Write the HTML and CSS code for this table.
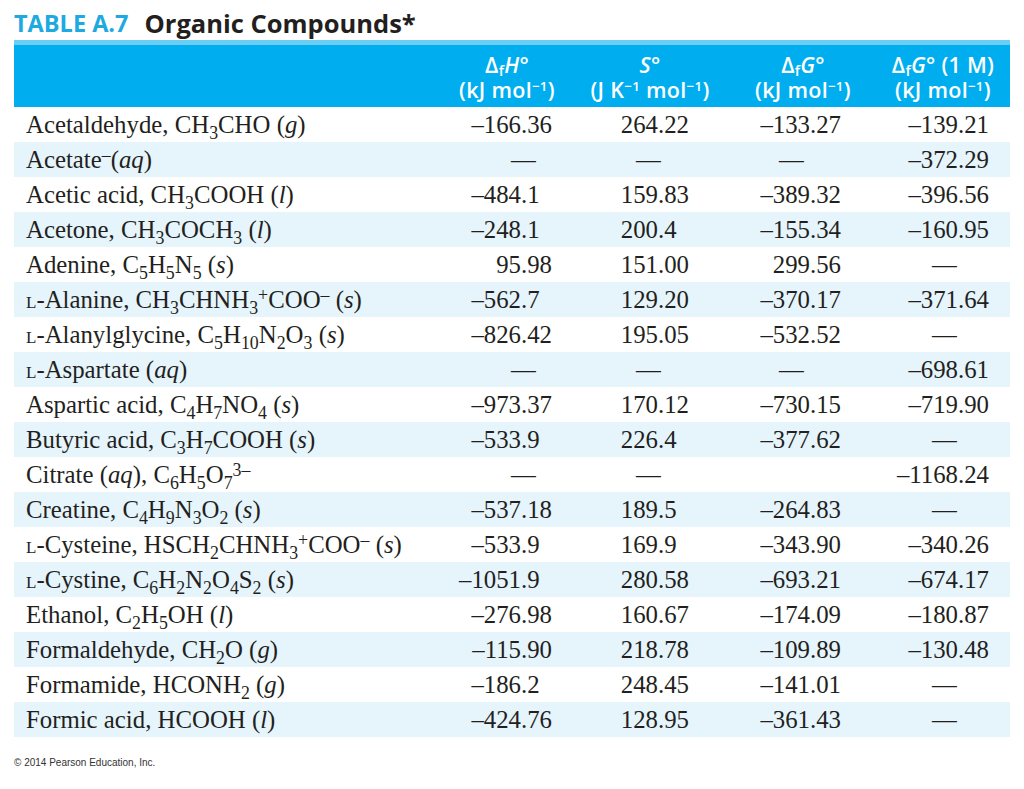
FILE: index.html
```html
<!DOCTYPE html>
<html>
<head>
<meta charset="utf-8">
<link rel="stylesheet" href="styles.css">
</head>
<body>
<div class="page">
  <h1 class="title"><span class="tag">TABLE A.7</span><span class="name">Organic Compounds*</span></h1>
  <div class="table">
    <div class="head">
      <div class="hc h0"></div>
      <div class="hc h1"><span>Δ<sub>f</sub><i>H</i>°</span><span>(kJ mol<sup>−1</sup>)</span></div>
      <div class="hc h2"><span><i>S</i>°</span><span>(J K<sup>−1</sup> mol<sup>−1</sup>)</span></div>
      <div class="hc h3"><span>Δ<sub>f</sub><i>G</i>°</span><span>(kJ mol<sup>−1</sup>)</span></div>
      <div class="hc h4"><span>Δ<sub>f</sub><i>G</i>° (1 M)</span><span>(kJ mol<sup>−1</sup>)</span></div>
    </div>

    <div class="row"><div class="nm">Acetaldehyde, CH<sub>3</sub>CHO (<i>g</i>)</div>
      <div class="c c1"><span class="i">–166</span><span class="f">.36</span></div>
      <div class="c c2"><span class="i">264</span><span class="f">.22</span></div>
      <div class="c c3"><span class="i">–133</span><span class="f">.27</span></div>
      <div class="c c4"><span class="i">–139</span><span class="f">.21</span></div></div>

    <div class="row alt"><div class="nm">Acetate<sup>–</sup>(<i>aq</i>)</div>
      <div class="c c1"><span class="d">—</span></div>
      <div class="c c2"><span class="d">—</span></div>
      <div class="c c3"><span class="d">—</span></div>
      <div class="c c4"><span class="i">–372</span><span class="f">.29</span></div></div>

    <div class="row"><div class="nm">Acetic acid, CH<sub>3</sub>COOH (<i>l</i>)</div>
      <div class="c c1"><span class="i">–484</span><span class="f">.1</span></div>
      <div class="c c2"><span class="i">159</span><span class="f">.83</span></div>
      <div class="c c3"><span class="i">–389</span><span class="f">.32</span></div>
      <div class="c c4"><span class="i">–396</span><span class="f">.56</span></div></div>

    <div class="row alt"><div class="nm">Acetone, CH<sub>3</sub>COCH<sub>3</sub> (<i>l</i>)</div>
      <div class="c c1"><span class="i">–248</span><span class="f">.1</span></div>
      <div class="c c2"><span class="i">200</span><span class="f">.4</span></div>
      <div class="c c3"><span class="i">–155</span><span class="f">.34</span></div>
      <div class="c c4"><span class="i">–160</span><span class="f">.95</span></div></div>

    <div class="row"><div class="nm">Adenine, C<sub>5</sub>H<sub>5</sub>N<sub>5</sub> (<i>s</i>)</div>
      <div class="c c1"><span class="i">95</span><span class="f">.98</span></div>
      <div class="c c2"><span class="i">151</span><span class="f">.00</span></div>
      <div class="c c3"><span class="i">299</span><span class="f">.56</span></div>
      <div class="c c4"><span class="d">—</span></div></div>

    <div class="row alt"><div class="nm"><span class="sc">l</span>-Alanine, CH<sub>3</sub>CHNH<sub>3</sub><sup>+</sup>COO<sup>–</sup> (<i>s</i>)</div>
      <div class="c c1"><span class="i">–562</span><span class="f">.7</span></div>
      <div class="c c2"><span class="i">129</span><span class="f">.20</span></div>
      <div class="c c3"><span class="i">–370</span><span class="f">.17</span></div>
      <div class="c c4"><span class="i">–371</span><span class="f">.64</span></div></div>

    <div class="row"><div class="nm"><span class="sc">l</span>-Alanylglycine, C<sub>5</sub>H<sub>10</sub>N<sub>2</sub>O<sub>3</sub> (<i>s</i>)</div>
      <div class="c c1"><span class="i">–826</span><span class="f">.42</span></div>
      <div class="c c2"><span class="i">195</span><span class="f">.05</span></div>
      <div class="c c3"><span class="i">–532</span><span class="f">.52</span></div>
      <div class="c c4"><span class="d">—</span></div></div>

    <div class="row alt"><div class="nm"><span class="sc">l</span>-Aspartate (<i>aq</i>)</div>
      <div class="c c1"><span class="d">—</span></div>
      <div class="c c2"><span class="d">—</span></div>
      <div class="c c3"><span class="d">—</span></div>
      <div class="c c4"><span class="i">–698</span><span class="f">.61</span></div></div>

    <div class="row"><div class="nm">Aspartic acid, C<sub>4</sub>H<sub>7</sub>NO<sub>4</sub> (<i>s</i>)</div>
      <div class="c c1"><span class="i">–973</span><span class="f">.37</span></div>
      <div class="c c2"><span class="i">170</span><span class="f">.12</span></div>
      <div class="c c3"><span class="i">–730</span><span class="f">.15</span></div>
      <div class="c c4"><span class="i">–719</span><span class="f">.90</span></div></div>

    <div class="row alt"><div class="nm">Butyric acid, C<sub>3</sub>H<sub>7</sub>COOH (<i>s</i>)</div>
      <div class="c c1"><span class="i">–533</span><span class="f">.9</span></div>
      <div class="c c2"><span class="i">226</span><span class="f">.4</span></div>
      <div class="c c3"><span class="i">–377</span><span class="f">.62</span></div>
      <div class="c c4"><span class="d">—</span></div></div>

    <div class="row"><div class="nm">Citrate (<i>aq</i>), C<sub>6</sub>H<sub>5</sub>O<sub>7</sub><sup>3–</sup></div>
      <div class="c c1"><span class="d">—</span></div>
      <div class="c c2"><span class="d">—</span></div>
      <div class="c c3"></div>
      <div class="c c4"><span class="i">–1168</span><span class="f">.24</span></div></div>

    <div class="row alt"><div class="nm">Creatine, C<sub>4</sub>H<sub>9</sub>N<sub>3</sub>O<sub>2</sub> (<i>s</i>)</div>
      <div class="c c1"><span class="i">–537</span><span class="f">.18</span></div>
      <div class="c c2"><span class="i">189</span><span class="f">.5</span></div>
      <div class="c c3"><span class="i">–264</span><span class="f">.83</span></div>
      <div class="c c4"><span class="d">—</span></div></div>

    <div class="row"><div class="nm"><span class="sc">l</span>-Cysteine, HSCH<sub>2</sub>CHNH<sub>3</sub><sup>+</sup>COO<sup>–</sup> (<i>s</i>)</div>
      <div class="c c1"><span class="i">–533</span><span class="f">.9</span></div>
      <div class="c c2"><span class="i">169</span><span class="f">.9</span></div>
      <div class="c c3"><span class="i">–343</span><span class="f">.90</span></div>
      <div class="c c4"><span class="i">–340</span><span class="f">.26</span></div></div>

    <div class="row alt"><div class="nm"><span class="sc">l</span>-Cystine, C<sub>6</sub>H<sub>2</sub>N<sub>2</sub>O<sub>4</sub>S<sub>2</sub> (<i>s</i>)</div>
      <div class="c c1"><span class="i">–1051</span><span class="f">.9</span></div>
      <div class="c c2"><span class="i">280</span><span class="f">.58</span></div>
      <div class="c c3"><span class="i">–693</span><span class="f">.21</span></div>
      <div class="c c4"><span class="i">–674</span><span class="f">.17</span></div></div>

    <div class="row"><div class="nm">Ethanol, C<sub>2</sub>H<sub>5</sub>OH (<i>l</i>)</div>
      <div class="c c1"><span class="i">–276</span><span class="f">.98</span></div>
      <div class="c c2"><span class="i">160</span><span class="f">.67</span></div>
      <div class="c c3"><span class="i">–174</span><span class="f">.09</span></div>
      <div class="c c4"><span class="i">–180</span><span class="f">.87</span></div></div>

    <div class="row alt"><div class="nm">Formaldehyde, CH<sub>2</sub>O (<i>g</i>)</div>
      <div class="c c1"><span class="i">–115</span><span class="f">.90</span></div>
      <div class="c c2"><span class="i">218</span><span class="f">.78</span></div>
      <div class="c c3"><span class="i">–109</span><span class="f">.89</span></div>
      <div class="c c4"><span class="i">–130</span><span class="f">.48</span></div></div>

    <div class="row"><div class="nm">Formamide, HCONH<sub>2</sub> (<i>g</i>)</div>
      <div class="c c1"><span class="i">–186</span><span class="f">.2</span></div>
      <div class="c c2"><span class="i">248</span><span class="f">.45</span></div>
      <div class="c c3"><span class="i">–141</span><span class="f">.01</span></div>
      <div class="c c4"><span class="d">—</span></div></div>

    <div class="row alt"><div class="nm">Formic acid, HCOOH (<i>l</i>)</div>
      <div class="c c1"><span class="i">–424</span><span class="f">.76</span></div>
      <div class="c c2"><span class="i">128</span><span class="f">.95</span></div>
      <div class="c c3"><span class="i">–361</span><span class="f">.43</span></div>
      <div class="c c4"><span class="d">—</span></div></div>
  </div>
  <p class="copy">© 2014 Pearson Education, Inc.</p>
</div>
</body>
</html>
```

FILE: styles.css
```css
html, body {
  margin: 0;
  padding: 0;
  background: #ffffff;
}

.page {
  width: 996px;
  padding: 0 0 0 14px;
}

.title {
  margin: 0;
  height: 40px;
  display: flex;
  align-items: center;
  gap: 16px;
  font-family: "Open Sans", "Liberation Sans", sans-serif;
  font-weight: 700;
  line-height: 1;
  padding-top: 7px;
  box-sizing: border-box;
}

.title .tag {
  color: #1ea9e1;
  font-size: 23.5px;
}

.title .name {
  color: #231f20;
  font-size: 25.5px;
}

.table {
  display: flex;
  flex-direction: column;
}

.head,
.row {
  display: grid;
  grid-template-columns: 431px 140px 145px 140px 140px;
}

.head {
  background: #00aeef;
  border-top: 5px solid #6acdf3;
  height: 62px;
  color: #ffffff;
  font-family: "Open Sans", "Liberation Sans", sans-serif;
  font-weight: 600;
  font-size: 21.5px;
  letter-spacing: 0.3px;
}

.hc {
  display: flex;
  flex-direction: column;
  align-items: center;
  padding-top: 7px;
  line-height: 25px;
  white-space: nowrap;
}

.h1 { padding-right: 16px; }
.h2 { padding-right: 15px; }
.h3 { padding-left: 6px; }
.h4 { padding-left: 6px; }

.hc sub {
  font-size: 0.68em;
  vertical-align: -0.22em;
  line-height: 0;
}

.hc sup {
  font-size: 0.62em;
  vertical-align: 0.55em;
  line-height: 0;
}

.row {
  height: 35px;
  font-family: "Liberation Serif", "Times New Roman", serif;
  font-size: 24.8px;
  line-height: 35px;
  color: #231f20;
  white-space: nowrap;
}

.row.alt {
  background: #e6f4fc;
}

.nm {
  padding-left: 12px;
}

.nm sub {
  font-size: 0.72em;
  vertical-align: -0.32em;
  line-height: 0;
}

.nm sup {
  font-size: 0.72em;
  vertical-align: 0.4em;
  line-height: 0;
}

.sc {
  font-variant: small-caps;
}

.c {
  display: flex;
}

.c1 { --iw: 76px; --dl: 66px; }
.c2 { --iw: 73px; --dl: 51px; }
.c3 { --iw: 80px; --dl: 49px; }
.c4 { --iw: 88px; --dl: 62px; }

.c .i {
  width: var(--iw);
  flex: 0 0 var(--iw);
  text-align: right;
}

.c .f {
  text-align: left;
}

.c .d {
  padding-left: var(--dl);
}

.copy {
  margin: 0;
  padding-top: 20px;
  font-family: "Liberation Sans", Arial, sans-serif;
  font-size: 10px;
  line-height: 12px;
  color: #333333;
}
```
